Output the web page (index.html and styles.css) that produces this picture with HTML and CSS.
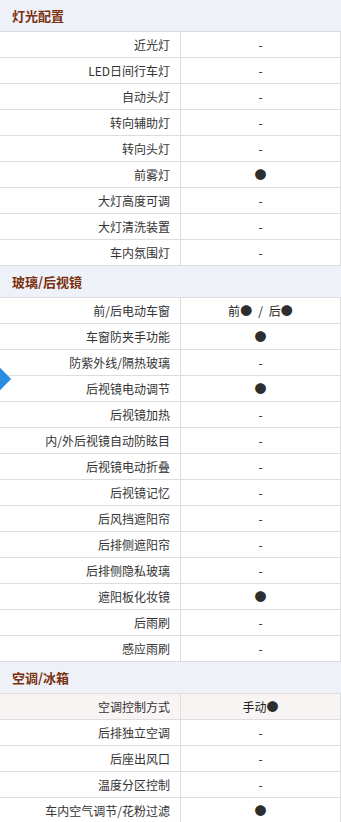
FILE: index.html
```html
<!DOCTYPE html>
<html lang="zh-CN">
<head>
<meta charset="utf-8">
<title>配置</title>
<link rel="stylesheet" href="styles.css">
</head>
<body>
<div class="spec">
  <div class="group">灯光配置</div>
  <div class="row"><div class="label">近光灯</div><div class="value">-</div></div>
  <div class="row"><div class="label">LED日间行车灯</div><div class="value">-</div></div>
  <div class="row"><div class="label">自动头灯</div><div class="value">-</div></div>
  <div class="row"><div class="label">转向辅助灯</div><div class="value">-</div></div>
  <div class="row"><div class="label">转向头灯</div><div class="value">-</div></div>
  <div class="row"><div class="label">前雾灯</div><div class="value"><span class="dot">●</span></div></div>
  <div class="row"><div class="label">大灯高度可调</div><div class="value">-</div></div>
  <div class="row"><div class="label">大灯清洗装置</div><div class="value">-</div></div>
  <div class="row"><div class="label">车内氛围灯</div><div class="value">-</div></div>

  <div class="group">玻璃/后视镜</div>
  <div class="row"><div class="label">前/后电动车窗</div><div class="value">前<span class="dot">●</span>&ensp;/&ensp;后<span class="dot">●</span></div></div>
  <div class="row"><div class="label">车窗防夹手功能</div><div class="value"><span class="dot">●</span></div></div>
  <div class="row"><div class="label">防紫外线/隔热玻璃</div><div class="value">-</div></div>
  <div class="row"><div class="label">后视镜电动调节</div><div class="value"><span class="dot">●</span></div></div>
  <div class="row"><div class="label">后视镜加热</div><div class="value">-</div></div>
  <div class="row"><div class="label">内/外后视镜自动防眩目</div><div class="value">-</div></div>
  <div class="row"><div class="label">后视镜电动折叠</div><div class="value">-</div></div>
  <div class="row"><div class="label">后视镜记忆</div><div class="value">-</div></div>
  <div class="row"><div class="label">后风挡遮阳帘</div><div class="value">-</div></div>
  <div class="row"><div class="label">后排侧遮阳帘</div><div class="value">-</div></div>
  <div class="row"><div class="label">后排侧隐私玻璃</div><div class="value">-</div></div>
  <div class="row"><div class="label">遮阳板化妆镜</div><div class="value"><span class="dot">●</span></div></div>
  <div class="row"><div class="label">后雨刷</div><div class="value">-</div></div>
  <div class="row"><div class="label">感应雨刷</div><div class="value">-</div></div>

  <div class="group">空调/冰箱</div>
  <div class="row hover"><div class="label">空调控制方式</div><div class="value">手动<span class="dot">●</span></div></div>
  <div class="row"><div class="label">后排独立空调</div><div class="value">-</div></div>
  <div class="row"><div class="label">后座出风口</div><div class="value">-</div></div>
  <div class="row"><div class="label">温度分区控制</div><div class="value">-</div></div>
  <div class="row"><div class="label">车内空气调节/花粉过滤</div><div class="value"><span class="dot">●</span></div></div>
</div>
<div class="nav-arrow"></div>
</body>
</html>
```
FILE: styles.css
```css
html, body {
  margin: 0;
  padding: 0;
  background: #ffffff;
}
body {
  width: 341px;
  overflow: hidden;
  font-family: "Noto Sans CJK SC", "Noto Sans", sans-serif;
  font-size: 12px;
  color: #333333;
  position: relative;
}
.spec {
  display: flex;
  flex-direction: column;
}
.group {
  height: 32px;
  box-sizing: border-box;
  border-bottom: 1px solid #dcdde2;
  background: #eff1f8;
  color: #7a3210;
  font-weight: bold;
  font-size: 13px;
  padding-left: 12px;
  display: flex;
  align-items: center;
}
.row {
  display: grid;
  grid-template-columns: 181px 160px;
  height: 26px;
  box-sizing: border-box;
  border-bottom: 1px solid #dddddd;
}
.row.hover {
  background: #f8f4f3;
}
.label {
  border-right: 1px solid #dddddd;
  text-align: right;
  padding-right: 10px;
  display: flex;
  align-items: center;
  justify-content: flex-end;
  white-space: nowrap;
}
.value {
  border-right: 1px solid #dddddd;
  display: flex;
  align-items: center;
  justify-content: center;
  white-space: pre;
  color: #222222;
}
.dot {
  font-size: 12px;
  color: #2e2e2e;
}
.nav-arrow {
  position: absolute;
  left: -13px;
  top: 369px;
  width: 20px;
  height: 20px;
  background: #2a8de2;
  transform: rotate(45deg);
}
```
